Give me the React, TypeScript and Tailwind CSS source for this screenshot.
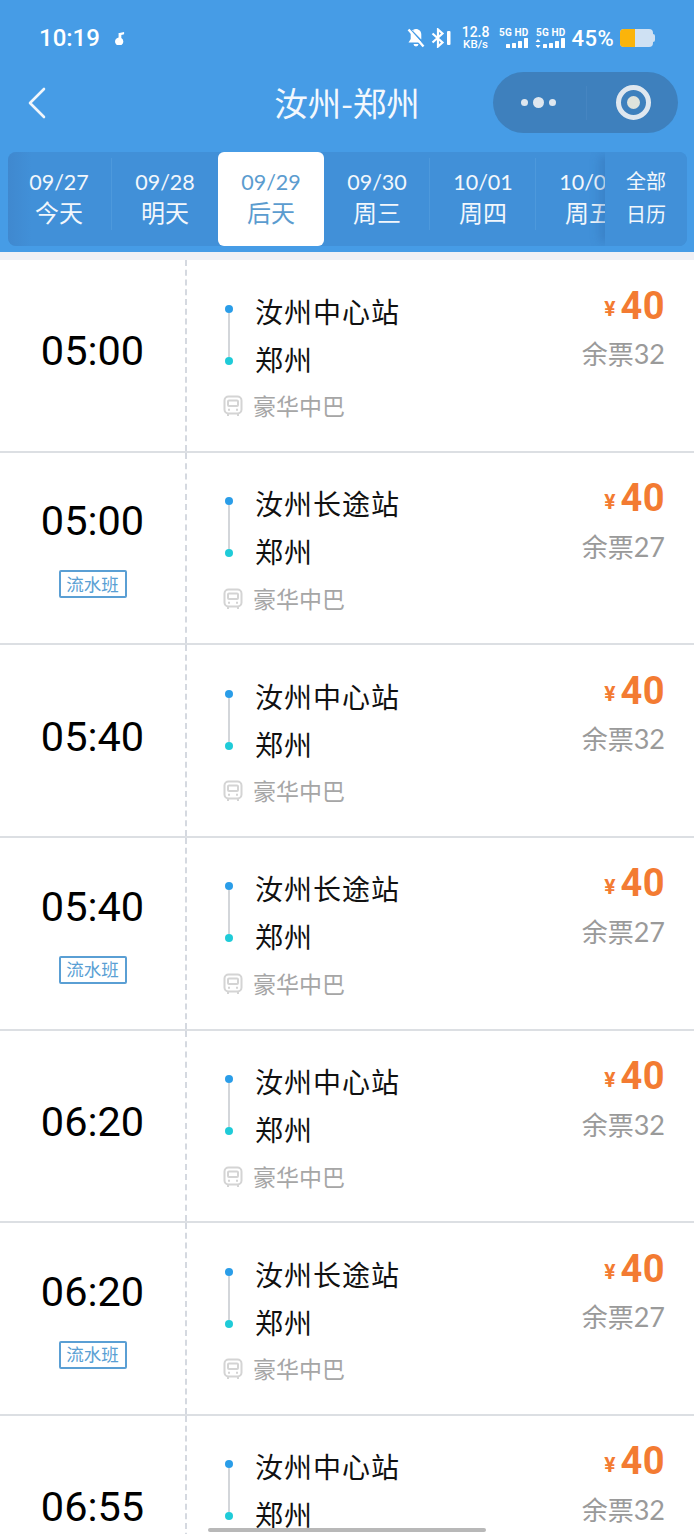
const cjk = "font-['Noto_Sans_CJK_SC','Noto_Sans',sans-serif]"

const dates = [
  { date: '09/27', label: '今天' },
  { date: '09/28', label: '明天' },
  { date: '09/29', label: '后天', active: true },
  { date: '09/30', label: '周三' },
  { date: '10/01', label: '周四' },
  { date: '10/02', label: '周五' },
]

const trips = [
  { time: '05:00', from: '汝州中心站', left: 32 },
  { time: '05:00', from: '汝州长途站', left: 27, tag: true },
  { time: '05:40', from: '汝州中心站', left: 32 },
  { time: '05:40', from: '汝州长途站', left: 27, tag: true },
  { time: '06:20', from: '汝州中心站', left: 32 },
  { time: '06:20', from: '汝州长途站', left: 27, tag: true },
  { time: '06:55', from: '汝州中心站', left: 32 },
]

function Signal({ arrows }: { arrows?: boolean }) {
  return (
    <div className="flex flex-col items-end">
      <span className="font-['Roboto',sans-serif] text-[10px] leading-[11px] font-bold tracking-[0.2px] whitespace-nowrap">5G HD</span>
      <svg width="31" height="11" viewBox="0 0 31 11" fill="#fff">
        {arrows && <path d="M3 1l2.500 3h-5zM3 10l2.500-3h-5z" />}
        <rect x="8" y="6" width="4" height="4" rx="0.5" />
        <rect x="14" y="5" width="4" height="5" rx="0.5" />
        <rect x="20" y="3" width="4" height="7" rx="0.5" />
        <rect x="26" y="0" width="4" height="10" rx="0.5" />
      </svg>
    </div>
  )
}

function StatusBar() {
  return (
    <div className="h-[72px] pt-[3px] flex items-center pl-[39px] pr-[39px] text-white">
      <span className="font-['Roboto',sans-serif] text-[24px] font-medium leading-none">10:19</span>
      <svg className="ml-[14px]" width="11" height="14" viewBox="0 0 12 14" fill="#fff">
        <path d="M6 1.500l5-1v2.500l-3 .7v3.300a4.500 4.500 0 1 1-3-.6v-4.900z" />
      </svg>
      <div className="ml-auto flex items-center">
        <svg width="18" height="20" viewBox="0 0 18 20" fill="#fff">
          <path d="M9 1c-3 0-5.300 2.300-5.300 5.500v4.500L1.500 14.500h13L4.500 3.500 9 1zM9 1c3 0 5.300 2.300 5.300 5.500v5L6 3z" />
          <path d="M6.500 16h5a2.500 2.500 0 0 1-5 0z" />
          <path d="M1.500 1.500l15 17" stroke="#fff" strokeWidth="2.400" />
        </svg>
        <svg className="ml-[6px]" width="21" height="20" viewBox="0 0 21 20" fill="none" stroke="#fff" strokeWidth="2.200">
          <path d="M1.500 5.500l10 9-4.500 4V1.500l4.500 4-10 9" />
          <rect x="16" y="3" width="3.500" height="14" rx="1" fill="#fff" stroke="none" />
        </svg>
        <div className="ml-[8px] w-[32px] flex flex-col font-['Roboto',sans-serif] font-medium text-center">
          <span className="text-[14px] leading-[12px]">12.8</span>
          <span className="text-[11.500px] leading-[12px] whitespace-nowrap">KB/s</span>
        </div>
        <div className="ml-[6px]"><Signal /></div>
        <div className="ml-[6px]"><Signal arrows /></div>
        <span className="ml-[6px] mt-[3px] font-['Roboto',sans-serif] text-[22px] font-medium leading-none tracking-[0.4px]">45%</span>
        <div className="ml-[6px] mt-[1px] flex items-center">
          <div className="w-[33px] h-[18px] rounded-[4px] bg-[#cfe1f3] overflow-hidden">
            <div className="w-[15px] h-full bg-[#fbb40a]" />
          </div>
          <div className="w-[2px] h-[8px] rounded-r-sm bg-[#cfe1f3]" />
        </div>
      </div>
    </div>
  )
}

function NavBar() {
  return (
    <div className="h-[61px] grid grid-cols-[1fr_auto_1fr] items-center text-white">
      <svg className="ml-[27px]" width="20" height="32" viewBox="0 0 20 32" fill="none" stroke="#f1f6fb" strokeWidth="2.600" strokeLinecap="round" strokeLinejoin="round">
        <path d="M17 2L3 16l14 14" />
      </svg>
      <h1 className={`${cjk} text-[33.500px] font-normal leading-none pb-[2px] text-[#f3f8fd]`}>汝州-郑州</h1>
      <div className="justify-self-end mr-[16px] w-[185px] h-[61px] rounded-full bg-[#3e80bd] flex items-center">
        <div className="w-[93px] flex items-center justify-center gap-[5px] pr-[3px]">
          <span className="w-[7px] h-[7px] rounded-full bg-[#dfe7ef]" />
          <span className="w-[11px] h-[11px] rounded-full bg-[#dfe7ef]" />
          <span className="w-[7px] h-[7px] rounded-full bg-[#dfe7ef]" />
        </div>
        <div className="w-px h-[34px] bg-[#4685c1]" />
        <div className="flex-1 flex items-center justify-center pl-[1px]">
          <div className="w-[35px] h-[35px] rounded-full border-[5px] border-[#dfe7ef] flex items-center justify-center">
            <span className="w-[13px] h-[13px] rounded-full bg-[#dfe3dc]" />
          </div>
        </div>
      </div>
    </div>
  )
}

function DateTabs() {
  return (
    <div className="mt-[19px] mx-[8px] w-[679px] h-[94px] rounded-[8px] bg-[#4190d8] overflow-hidden relative flex">
      {dates.map(d => (
        <div
          key={d.date}
          className={`relative shrink-0 h-full w-[106px] first:w-[104px] first:pr-[2px] flex flex-col items-center ${d.active ? 'bg-white rounded-[6px] text-[#5b9ccf]' : 'text-[#f2f7fc]'}`}
        >
          {!d.active && d.label !== '明天' && <div className="absolute right-0 top-[6px] bottom-[16px] w-px bg-[#4d99dc]" />}
          <span className="mt-[16px] font-['Lato',sans-serif] text-[21.500px] leading-[28px]">{d.date}</span>
          <span className={`${cjk} text-[24px] leading-[32px]`}>{d.label}</span>
        </div>
      ))}
      <div className="absolute left-0 top-0 w-[24px] h-full bg-gradient-to-r from-[#3f85cb]/70 to-transparent" />
      <div className="absolute right-0 top-0 h-full w-[82px] bg-[#4190d8] flex flex-col items-center text-[#f2f7fc] shadow-[-10px_0_8px_-4px_rgba(50,110,175,0.35)]">
        <span className={`${cjk} mt-[15px] text-[20px] leading-[28px]`}>全部</span>
        <span className={`${cjk} mt-[5px] text-[20px] leading-[28px]`}>日历</span>
      </div>
    </div>
  )
}

function BusIcon() {
  return (
    <svg className="mt-[1px]" width="20" height="22" viewBox="0 0 20 22" fill="none" stroke="#d4d4d4" strokeWidth="2">
      <rect x="1.500" y="1.500" width="17" height="17" rx="4" />
      <rect x="5" y="5.500" width="10" height="5.500" rx="1" />
      <path d="M5 18.500V21M15 18.500V21M5 14.800h2M13 14.800h2" />
    </svg>
  )
}

function TripRow({ time, from, left, tag }: { time: string; from: string; left: number; tag?: boolean }) {
  return (
    <div className="h-[192.67px] flex items-start bg-white border-b-2 border-[#dcdfe3] overflow-hidden shrink-0">
      <div className={`w-[185px] shrink-0 self-stretch flex flex-col items-center justify-center ${tag ? '' : 'pb-[8px]'}`}>
        <span className="font-['Roboto',sans-serif] text-[41.500px] leading-[48px] text-black">{time}</span>
        {tag && (
          <span className={`${cjk} mt-[25px] w-[68px] h-[28px] pb-[2px] flex items-center justify-center rounded-[2px] border-2 border-[#5a9fd4] text-[17.500px] leading-none text-[#5a9fd4]`}>
            流水班
          </span>
        )}
      </div>
      <div className="w-0 self-stretch border-r-2 border-dashed border-[#d5d9e0]" />
      <div className="flex-1 flex">
        <div className="flex-1 pt-[26.500px]">
          <div className="flex pl-[38px]">
            <div className="mt-[18px] h-[60px] w-[8px] flex flex-col items-center">
              <span className="w-[8px] h-[8px] rounded-full bg-[#2a9de8]" />
              <span className="flex-1 w-[2px] bg-[#d3d6da]" />
              <span className="w-[8px] h-[8px] rounded-full bg-[#1fcbd8]" />
            </div>
            <div className={`${cjk} ml-[22px] text-[28px] tracking-[1px] text-[#111]`}>
              <div className="h-[48px] flex items-center leading-none">{from}</div>
              <div className="h-[48px] flex items-center leading-none">郑州</div>
            </div>
          </div>
          <div className="flex items-center h-[46px] pl-[36px]">
            <BusIcon />
            <span className={`${cjk} ml-[10px] text-[23px] leading-none text-[#a6a6a6]`}>豪华中巴</span>
          </div>
        </div>
        <div className="pr-[29px] pt-[22px] flex flex-col items-end">
          <div className="h-[47px] flex items-center text-[#f37b32] font-['Roboto',sans-serif] font-bold">
            <span className="text-[21px] leading-none mt-[8px]">¥</span>
            <span className="ml-[5px] text-[38px] leading-none tracking-[0.5px]">40</span>
          </div>
          <div className={`${cjk} text-[26px] leading-[48px] text-[#9a9a9a]`}>
            余票<span className="font-['Lato',sans-serif] text-[27px]">{left}</span>
          </div>
        </div>
      </div>
    </div>
  )
}

export default function App() {
  return (
    <div className="relative w-[694px] h-[1534px] overflow-hidden bg-white flex flex-col">
      <div className="h-[252px] shrink-0 bg-[#469ce6]">
        <StatusBar />
        <NavBar />
        <DateTabs />
      </div>
      <div className="h-[8px] shrink-0 bg-[#eff0f5]" />
      <div className="flex flex-col">
        {trips.map((t, i) => (
          <TripRow key={i} {...t} />
        ))}
      </div>
      <div className="absolute left-[208px] top-[1528px] w-[278px] h-[4px] rounded-full bg-[#b8b8b8]" />
    </div>
  )
}
